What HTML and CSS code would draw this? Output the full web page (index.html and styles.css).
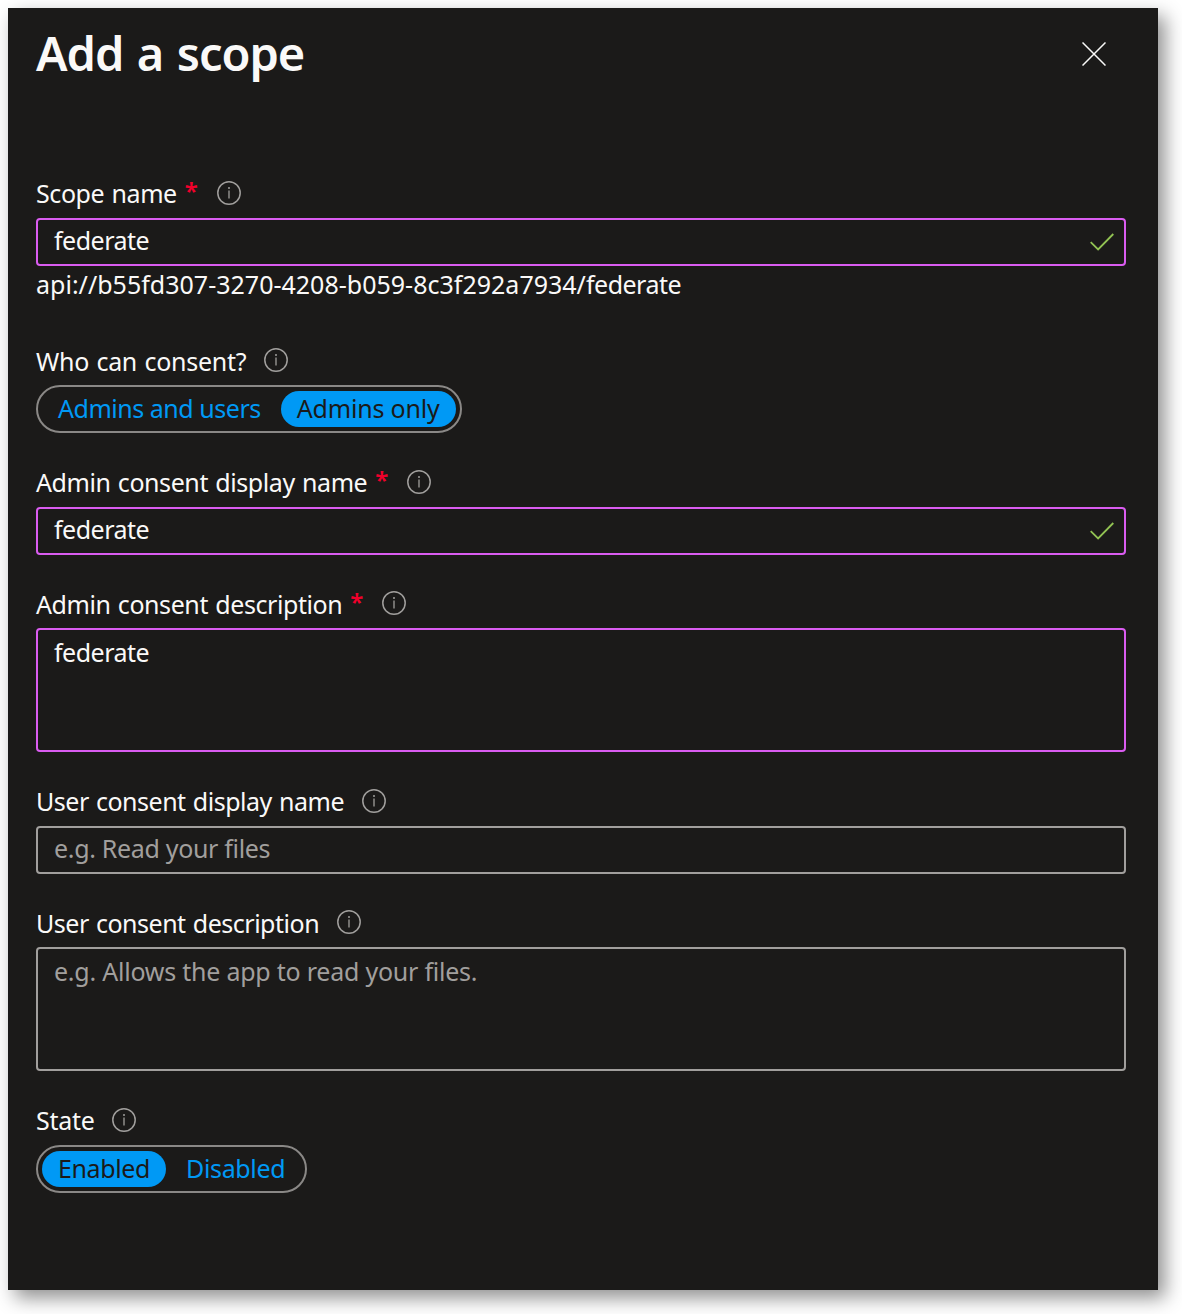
FILE: index.html
```html
<!DOCTYPE html>
<html lang="en">
<head>
<meta charset="utf-8">
<title>Add a scope</title>
<link rel="stylesheet" href="styles.css">
</head>
<body>
<svg class="sprite" aria-hidden="true">
  <symbol id="info" viewBox="0 0 24 24">
    <circle cx="12" cy="12" r="11.2" fill="none" stroke="currentColor" stroke-width="1.5"/>
    <path d="M12 9.6v8" stroke="currentColor" stroke-width="1.3"/>
    <circle cx="12" cy="7" r="1" fill="currentColor"/>
  </symbol>
  <symbol id="check" viewBox="0 0 24 18">
    <path d="M.7 9.2l7.4 7.2L23.3 1" fill="none" stroke="currentColor" stroke-width="1.8"/>
  </symbol>
</svg>
<main class="panel">
  <header class="panel-header">
    <h1 class="title">Add a scope</h1>
    <svg class="close" viewBox="0 0 24 24"><path d="M.5.5l23 23M23.5.5l-23 23" stroke="currentColor" stroke-width="1.5"/></svg>
  </header>
  <section class="field">
    <div class="label">Scope name<span class="required">*</span><svg class="info"><use href="#info"/></svg></div>
    <div class="input valid">federate<svg class="check"><use href="#check"/></svg></div>
    <div class="helper">api://b55fd307-3270-4208-b059-8c3f292a7934/<span class="scope">federate</span></div>
  </section>
  <section class="field after-helper">
    <div class="label question">Who can consent?<svg class="info"><use href="#info"/></svg></div>
    <div class="toggle"><span class="option wide">Admins and users</span><span class="option selected short">Admins only</span></div>
  </section>
  <section class="field">
    <div class="label">Admin consent display name<span class="required">*</span><svg class="info"><use href="#info"/></svg></div>
    <div class="input valid">federate<svg class="check"><use href="#check"/></svg></div>
  </section>
  <section class="field">
    <div class="label">Admin consent description<span class="required">*</span><svg class="info"><use href="#info"/></svg></div>
    <div class="textarea valid">federate</div>
  </section>
  <section class="field">
    <div class="label user">User consent display name<svg class="info"><use href="#info"/></svg></div>
    <div class="input placeholder">e.g. Read your files</div>
  </section>
  <section class="field">
    <div class="label user">User consent description<svg class="info"><use href="#info"/></svg></div>
    <div class="textarea placeholder long">e.g. Allows the app to read your files.</div>
  </section>
  <section class="field">
    <div class="label state">State<svg class="info"><use href="#info"/></svg></div>
    <div class="toggle"><span class="option selected">Enabled</span><span class="option">Disabled</span></div>
  </section>
</main>
</body>
</html>
```
FILE: styles.css
```css
* { box-sizing: border-box; }
body {
  margin: 0;
  padding: 8px;
  height: 1314px;
  overflow: hidden;
  background: #fff;
  color: #faf9f8;
  font: 25px/36px "Noto Sans", "Open Sans", sans-serif;
  white-space: nowrap;
}
.sprite { display: none; }
.panel {
  width: 1150px;
  height: 1282px;
  padding: 0 32px 0 28px;
  background: #1b1a19;
  box-shadow: 7px 8px 18px rgba(0, 0, 0, .44);
}
.panel-header {
  display: flex;
  justify-content: space-between;
  height: 167px;
  padding: 12px 20px 0 0;
}
.title {
  margin: 0;
  font-size: 47px;
  line-height: 66px;
  font-weight: 600;
  letter-spacing: -1.05px;
  word-spacing: 2.4px;
}
.close { width: 24px; height: 24px; margin-top: 22px; }
.field + .field { margin-top: 31px; }
.field + .after-helper { margin-top: 41px; }
.label {
  display: flex;
  height: 36px;
  margin-bottom: 7px;
  letter-spacing: -.42px;
  word-spacing: 1.2px;
}
.label.question { letter-spacing: -.28px; }
.label.user { letter-spacing: -.49px; }
.label.state { letter-spacing: -.29px; }
.field:nth-of-type(even) .label { margin-bottom: 6px; }
.required {
  width: 14px;
  margin-left: 8px;
  font-size: 24px;
  font-weight: 600;
  line-height: 32px;
  color: #f1002b;
}
.info { width: 24px; height: 24px; margin: 6px 0 0 18px; color: #a19f9d; }
.field:nth-of-type(even) .info { margin-top: 5px; }
.input, .textarea { border: 2px solid #a19f9d; border-radius: 4px; padding: 0 10px 0 16px; }
.input { display: flex; justify-content: space-between; height: 48px; line-height: 40px; }
.textarea { height: 124px; line-height: 44px; }
.valid { border-color: #da5cf0; letter-spacing: -.5px; }
.placeholder { color: #a19f9d; letter-spacing: -.32px; }
.placeholder.long { letter-spacing: -.23px; }
.helper { letter-spacing: .01px; }
.scope { letter-spacing: -.5px; }
.check { width: 24px; height: 18px; margin-top: 13px; color: #92c353; }
.toggle {
  display: inline-flex;
  gap: 4px;
  height: 48px;
  padding: 4px;
  border: 2px solid #8a8886;
  border-radius: 24px;
  vertical-align: top;
}
.option {
  height: 36px;
  padding: 0 16px;
  border-radius: 18px;
  line-height: 34px;
  letter-spacing: -.37px;
  color: #0099f5;
}
.option.wide { letter-spacing: -.47px; }
.option.short { letter-spacing: -.19px; }
.selected { background: #0099f5; color: #1b1a19; }
```
